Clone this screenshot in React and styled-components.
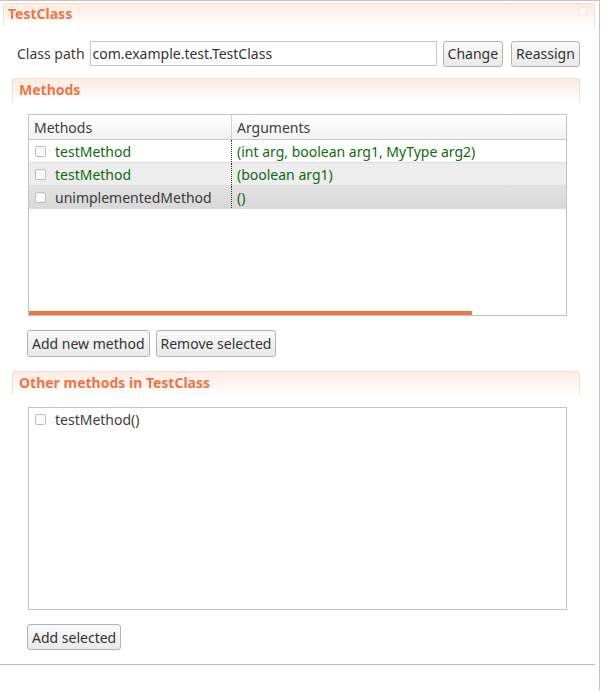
import React from "react";
import styled, { createGlobalStyle } from "styled-components";

const GlobalStyle = createGlobalStyle`
  html, body {
    margin: 0;
    padding: 0;
    background: #ffffff;
  }
  body {
    font-family: "Noto Sans", "DejaVu Sans", sans-serif;
    font-size: 14px;
    color: #3c3c3c;
  }
`;

const Window = styled.div`
  width: 600px;
  height: 691px;
  border-top: 1px solid #c4c4c4;
  border-right: 1px solid #c4c4c4;
  display: flex;
  flex-direction: column;
  box-sizing: border-box;
`;

const Header = styled.div`
  position: relative;
  margin: ${(p) => p.$margin || "0"};
  height: ${(p) => p.$height || "22px"};
  padding-left: ${(p) => p.$pad || "4px"};
  padding-bottom: 3px;
  box-sizing: border-box;
  display: flex;
  align-items: center;
  border: 1px solid #f9ddd0;
  border-bottom: none;
  border-radius: 3px 3px 0 0;
  background: linear-gradient(#fdebe2, #ffffff);
  color: #f07443;
  font-weight: bold;
  font-size: 14px;
`;

const CloseBox = styled.span`
  position: absolute;
  right: 7px;
  top: 3px;
  width: 6px;
  height: 6px;
  background: #ffffff;
  border: 1px solid #f6e6de;
`;

const Body = styled.div`
  display: flex;
  flex-direction: column;
`;

const PathRow = styled.div`
  display: flex;
  align-items: center;
  gap: 6px;
  margin: 15px 0 0 17px;
  height: 25px;
`;

const Label = styled.span`
  margin-right: -1px;
`;

const TextInput = styled.div`
  width: 343px;
  height: 23px;
  border: 1px solid #c6c6c6;
  background: #fff;
  display: flex;
  align-items: center;
  padding-left: 2px;
  color: #333;
`;

const Button = styled.button`
  height: ${(p) => p.$h || "26px"};
  padding: 0 4px;
  margin-left: ${(p) => p.$ml || "0"};
  font-family: inherit;
  font-size: 14px;
  color: #333;
  border: 1px solid #b2b2b2;
  border-radius: 3px;
  background: linear-gradient(#fafafa, #e9e9e9);
  cursor: pointer;
`;

const Section = styled.div`
  display: flex;
  flex-direction: column;
  margin: 0 19px 0 12px;
`;

const Table = styled.div`
  margin: 12px 0 0 16px;
  width: 539px;
  height: 202px;
  box-sizing: border-box;
  border: 1px solid #c2c2c2;
  display: flex;
  flex-direction: column;
  background: #fff;
`;

const HeadRow = styled.div`
  display: grid;
  grid-template-columns: 202px 1fr;
  height: 24px;
  border-bottom: 1px solid #c8c8c8;
  background: linear-gradient(#ffffff, #f1f1f1);
`;

const HeadCell = styled.div`
  display: flex;
  align-items: center;
  padding-left: 5px;
  border-left: ${(p) => (p.$first ? "none" : "1px solid #d0d0d0")};
`;

const Row = styled.div`
  display: grid;
  grid-template-columns: 202px 1fr;
  height: 22px;
  border-bottom: 1px solid #dcdcdc;
  background: ${(p) =>
    p.$tone === "sel"
      ? "linear-gradient(#e2e2e2, #d9d9d9)"
      : p.$tone === "alt"
      ? "#ededed"
      : "#ffffff"};
  color: ${(p) => (p.$green ? "#0f6a0f" : "#3a3a3a")};
`;

const Cell = styled.div`
  display: flex;
  align-items: center;
  gap: 9px;
  padding-left: ${(p) => (p.$first ? "6px" : "5px")};
  border-left: ${(p) => (p.$first ? "none" : "1px dotted #333")};
  color: ${(p) => (p.$args ? "#0f6a0f" : "inherit")};
  white-space: nowrap;
`;

const Check = styled.span`
  width: 9px;
  height: 9px;
  border: 1px solid #bdbdbd;
  border-radius: 2px;
  background: #fafafa;
  flex: none;
`;

const Spacer = styled.div`
  flex: 1;
`;

const Scrollbar = styled.div`
  height: 4px;
  width: 443px;
  background: #f07443;
`;

const ButtonRow = styled.div`
  display: flex;
  gap: 6px;
  margin: ${(p) => p.$margin || "0"};
`;

const ListBox = styled.div`
  margin: 12px 0 0 16px;
  width: 539px;
  height: 203px;
  box-sizing: border-box;
  border: 1px solid #c2c2c2;
  padding: 2px 0 0 6px;
`;

const ListItem = styled.div`
  display: flex;
  align-items: center;
  gap: 9px;
  height: 18px;
`;

const Divider = styled.div`
  margin-top: 14px;
  width: 595px;
  border-top: 1px solid #b8b8b8;
`;

const methods = [
  { name: "testMethod", args: "(int arg, boolean arg1, MyType arg2)", tone: "plain", green: true },
  { name: "testMethod", args: "(boolean arg1)", tone: "alt", green: true },
  { name: "unimplementedMethod", args: "()", tone: "sel", green: false },
];

export default function App() {
  return (
    <>
      <GlobalStyle />
      <Window>
        <Header $margin="2px 4px 0 3px" $height="23px">
          TestClass
          <CloseBox />
        </Header>
        <Body>
          <PathRow>
            <Label>Class path</Label>
            <TextInput>com.example.test.TestClass</TextInput>
            <Button>Change</Button>
            <Button $ml="2px">Reassign</Button>
          </PathRow>
          <Section>
            <Header $margin="12px 0 0 0" $height="24px" $pad="6px">
              Methods
            </Header>
            <Table>
              <HeadRow>
                <HeadCell $first>Methods</HeadCell>
                <HeadCell>Arguments</HeadCell>
              </HeadRow>
              {methods.map((m, i) => (
                <Row key={i} $tone={m.tone} $green={m.green}>
                  <Cell $first>
                    <Check />
                    {m.name}
                  </Cell>
                  <Cell $args>{m.args}</Cell>
                </Row>
              ))}
              <Spacer />
              <Scrollbar />
            </Table>
            <ButtonRow $margin="14px 0 0 15px">
              <Button $h="27px">Add new method</Button>
              <Button $h="27px">Remove selected</Button>
            </ButtonRow>
            <Header $margin="14px 0 0 0" $height="24px" $pad="6px">
              Other methods in TestClass
            </Header>
            <ListBox>
              <ListItem>
                <Check />
                testMethod()
              </ListItem>
            </ListBox>
            <ButtonRow $margin="14px 0 0 15px">
              <Button>Add selected</Button>
            </ButtonRow>
          </Section>
          <Divider />
        </Body>
      </Window>
    </>
  );
}
